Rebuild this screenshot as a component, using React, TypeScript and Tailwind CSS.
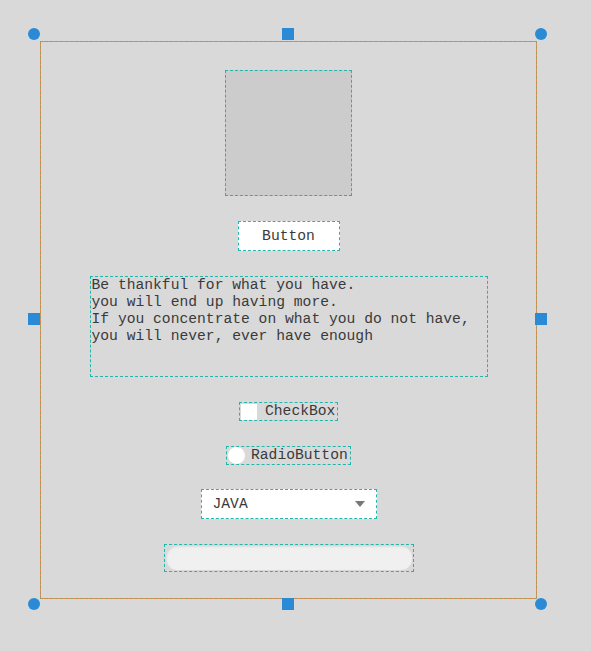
const MONO = 'font-["Liberation_Mono","Courier_New",monospace]';

const HANDLES = [
  { key: 'tl', className: 'left-[28px] top-[28px] rounded-full' },
  { key: 'tr', className: 'left-[535px] top-[28px] rounded-full' },
  { key: 'bl', className: 'left-[28px] top-[598px] rounded-full' },
  { key: 'br', className: 'left-[535px] top-[598px] rounded-full' },
  { key: 't', className: 'left-[282px] top-[28px]' },
  { key: 'b', className: 'left-[282px] top-[598px]' },
  { key: 'l', className: 'left-[28px] top-[313px]' },
  { key: 'r', className: 'left-[535px] top-[313px]' },
];

export default function App() {
  return (
    <div className={`relative h-[651px] w-[591px] overflow-hidden bg-[#d9d9d9] pl-[40px] pt-[41px] text-[14.67px] text-[#3a3a3a] ${MONO}`}>
      {/* Design frame */}
      <div className="flex h-[558px] w-[497px] flex-col items-center gap-[25px] border border-[#ee8a45] pt-[28px] outline outline-1 -outline-offset-1 outline-dashed outline-[#5aa890]/50">
        {/* Image placeholder */}
        <div className="h-[126px] w-[127px] border border-dashed border-[#22b5ab] bg-[#cccccc]" />

        {/* Button */}
        <button className="flex h-[30px] w-[102px] items-center justify-center border border-dashed border-[#22b5ab] bg-white leading-none">
          Button
        </button>

        {/* TextArea */}
        <div className="h-[101px] w-[398px] whitespace-pre border border-dashed border-[#22b5ab] px-[1px] leading-[17px]">
          {'Be thankful for what you have.\nyou will end up having more.\nIf you concentrate on what you do not have,\nyou will never, ever have enough'}
        </div>

        {/* CheckBox */}
        <label className="flex h-[19px] w-[99px] items-center gap-[8px] border border-dashed border-[#22b5ab] pl-[1px] leading-none">
          <span className="h-[16px] w-[16px] bg-white" />
          <span>CheckBox</span>
        </label>

        {/* RadioButton */}
        <label className="flex h-[19px] w-[125px] items-center gap-[6px] border border-dashed border-[#22b5ab] pl-[1px] leading-none">
          <span className="h-[17px] w-[17px] rounded-full bg-white" />
          <span>RadioButton</span>
        </label>

        {/* Select */}
        <div className="-mt-[1px] flex h-[30px] w-[176px] items-center justify-between border border-dashed border-[#22b5ab] bg-white pl-[11px] pr-[11px] leading-none">
          <span className="pt-[1px]">JAVA</span>
          <svg width="10" height="6" viewBox="0 0 10 6">
            <path d="M0 0h10L5 6z" fill="#777" />
          </svg>
        </div>

        {/* Text input */}
        <div className="h-[28px] w-[250px] border border-dashed border-[#22b5ab] p-[1px]">
          <div className="h-full w-full rounded-[11px] bg-[#f0f0f0] shadow-[inset_1px_1px_2px_rgba(0,0,0,0.08)]" />
        </div>
      </div>

      {/* Selection handles */}
      {HANDLES.map((h) => (
        <span key={h.key} className={`absolute h-[12px] w-[12px] bg-[#2b8ad6] ${h.className}`} />
      ))}
    </div>
  );
}
